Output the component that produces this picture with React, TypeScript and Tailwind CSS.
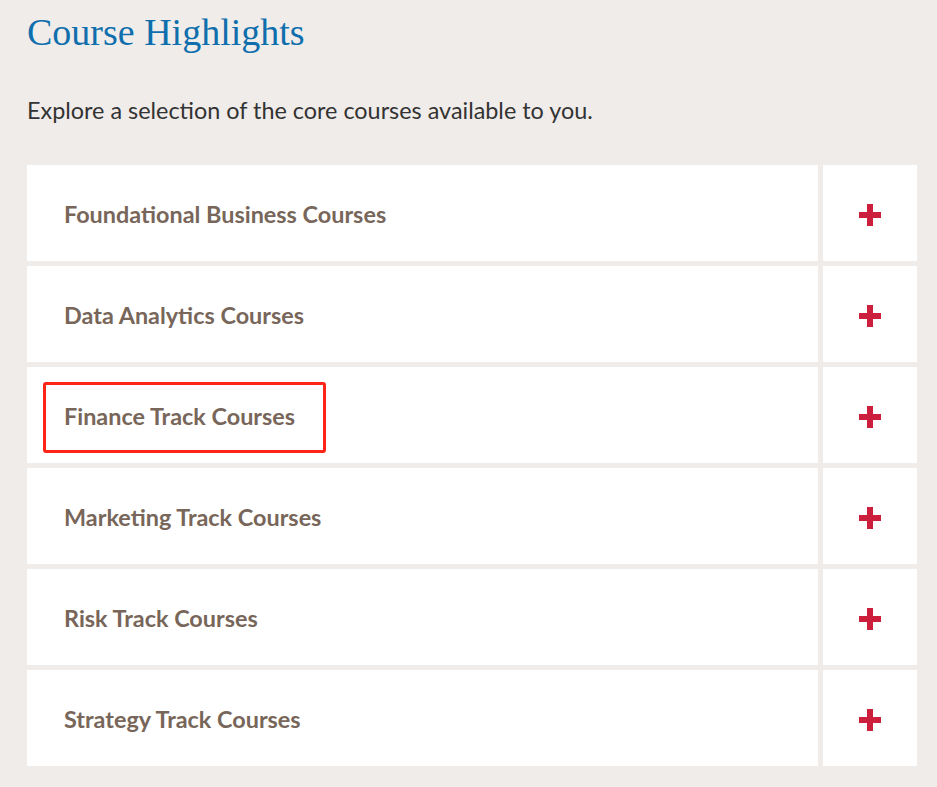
import React from "react";

const courses = [
  "Foundational Business Courses",
  "Data Analytics Courses",
  "Finance Track Courses",
  "Marketing Track Courses",
  "Risk Track Courses",
  "Strategy Track Courses",
];

const Plus = () => (
  <svg width="22" height="22" viewBox="0 0 22 22">
    <rect x="8" y="0" width="6" height="22" fill="#cc1f3d" />
    <rect x="0" y="8" width="22" height="6" fill="#cc1f3d" />
  </svg>
);

export default function App() {
  return (
    <div className="min-h-[787px] w-[937px] bg-[#f0ecea] pl-[27px] pt-[10px]">
      <h2
        className="text-[38px] leading-[44px] text-[#0f6fad]"
        style={{ fontFamily: '"Liberation Serif", serif' }}
      >
        Course Highlights
      </h2>
      <p
        className="mt-[41px] text-[23.4px] leading-[30px] text-[#333333]"
        style={{ fontFamily: 'Lato, sans-serif' }}
      >
        Explore a selection of the core courses available to you.
      </p>
      <div className="mt-[40px] flex w-[890px] flex-col gap-[5px]">
        {courses.map((c) => (
          <div key={c} className="flex h-[96px] gap-[5px]">
            <div className="relative flex flex-1 items-center bg-white pl-[37px] pt-[4px]">
              <span
                className="text-[23.4px] font-bold text-[#776659]"
                style={{ fontFamily: 'Lato, sans-serif' }}
              >
                {c}
              </span>
              {c === "Finance Track Courses" && (
                <div className="absolute left-[16px] top-[15px] h-[71px] w-[283px] rounded-[3px] border-[3px] border-[#ff2418]" />
              )}
            </div>
            <div className="flex w-[94px] items-center justify-center bg-white pt-[4px]">
              <Plus />
            </div>
          </div>
        ))}
      </div>
    </div>
  );
}
